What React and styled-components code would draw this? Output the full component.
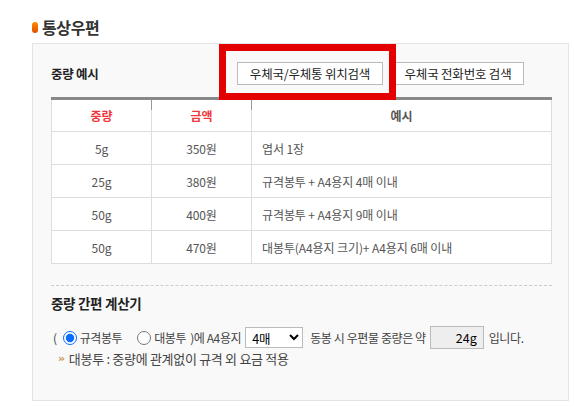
import styled, { createGlobalStyle } from "styled-components";

const GlobalStyle = createGlobalStyle`
  body {
    margin: 0;
    background: #fff;
    font-family: "Noto Sans CJK KR", "Noto Sans", sans-serif;
    color: #333;
  }
`;

/* ===== Layout ===== */
const Page = styled.div`
  padding: 16px 5px 12px 32px;
`;

const TitleRow = styled.div`
  display: flex;
  align-items: center;
  gap: 4px;
  height: 22px;
  margin-bottom: 5px;
`;

const TitleMark = styled.span`
  width: 6px;
  height: 11px;
  border-radius: 3px;
  background: linear-gradient(#ff8a00, #e04e00);
`;

const Title = styled.h2`
  margin: 0;
  font-size: 16px;
  font-weight: 700;
  letter-spacing: -0.4px;
  color: #333;
  line-height: 22px;
`;

const Panel = styled.section`
  background: #f9f9f9;
  border: 1px solid #e4e4e4;
  padding: 18px 16px 33px 18px;
`;

/* ===== Top bar ===== */
const TopBar = styled.div`
  display: flex;
  align-items: center;
  height: 23px;
  margin-bottom: 12px;
`;

const Heading = styled.h3`
  flex: 1;
  margin: 0;
  font-size: ${(p) => p.$size || 12.5}px;
  font-weight: 700;
  color: #222;
  line-height: 16px;
  letter-spacing: -0.3px;
`;

const ButtonGroup = styled.div`
  display: flex;
  gap: 9px;
  margin-right: 28px;
`;

const Highlight = styled.div`
  position: relative;
  display: flex;

  &::after {
    content: "";
    position: absolute;
    top: -18px;
    bottom: -15px;
    left: -18px;
    right: -13px;
    border: 7px solid #e30000;
    pointer-events: none;
  }
`;

const Button = styled.button`
  width: ${(p) => p.$w}px;
  height: 23px;
  padding: 0;
  border: 1px solid #bbb;
  background: #fff;
  font-family: inherit;
  font-size: 12.5px;
  letter-spacing: -0.2px;
  color: #222;
  line-height: 21px;
  cursor: pointer;
`;

/* ===== Table ===== */
const Table = styled.table`
  width: 501px;
  border-collapse: collapse;
  border-top: 3px solid #888;
  background: #fff;
  table-layout: fixed;
`;

const Th = styled.th`
  position: relative;
  height: 31px;
  padding: 0;
  border: 1px solid #ddd;
  border-top: none;
  border-left-color: ${(p) => (p.$first ? "#ddd" : "transparent")};
  font-size: 12px;
  font-weight: 700;
  color: ${(p) => (p.$red ? "#f0363e" : "#555")};

  &::before {
    content: "";
    display: ${(p) => (p.$first ? "none" : "block")};
    position: absolute;
    left: -1px;
    top: 0;
    width: 1px;
    height: 10px;
    background: #999;
  }
`;

const Td = styled.td`
  height: 32px;
  padding: 0 0 0 ${(p) => (p.$left ? "10px" : "0")};
  border: 1px solid #ddd;
  font-size: 12px;
  letter-spacing: -0.1px;
  color: #555;
  text-align: ${(p) => (p.$left ? "left" : "center")};
`;

/* ===== Calculator ===== */
const Divider = styled.hr`
  width: 501px;
  margin: 21px 0 0;
  border: none;
  border-top: 1px dashed #ccc;
`;

const CalcHeading = styled(Heading)`
  margin-top: 9px;
`;

const CalcRow = styled.div`
  display: flex;
  align-items: center;
  height: 23px;
  margin-top: 15px;
  padding-left: 2px;
  font-size: 12px;
  letter-spacing: -0.4px;
  color: #444;
  white-space: nowrap;
`;

const RadioLabel = styled.label`
  display: flex;
  align-items: center;
  margin-right: ${(p) => p.$gap || 0}px;

  input {
    width: 14px;
    height: 14px;
    margin: 0 3px 0 ${(p) => p.$lead || 4}px;
    accent-color: #0a6cff;
  }
`;

const Select = styled.select`
  width: 58px;
  height: 21px;
  margin: 0 7px 0 4px;
  padding: 0 2px;
  border: 1px solid #bbb;
  border-radius: 0;
  background: #fff;
  font-family: inherit;
  font-size: 12.5px;
  color: #000;
`;

const Result = styled.input`
  width: 54px;
  height: 23px;
  box-sizing: border-box;
  margin: 0 5px 0 4px;
  padding: 0 6px 0 0;
  border: 1px solid #bbb;
  background: #eee;
  font-family: inherit;
  font-size: 12.5px;
  color: #000;
  text-align: right;
`;

const Note = styled.p`
  display: flex;
  align-items: center;
  gap: 4px;
  margin: 2px 0 0 7px;
  font-size: 13px;
  letter-spacing: -0.3px;
  color: #444;
  line-height: 16px;
`;

const Bullet = styled.span`
  color: #c8955e;
  font-family: "DejaVu Sans", sans-serif;
  font-weight: 700;
  font-size: 11px;
`;

const rows = [
  ["5g", "350원", "엽서 1장"],
  ["25g", "380원", "규격봉투 + A4용지 4매 이내"],
  ["50g", "400원", "규격봉투 + A4용지 9매 이내"],
  ["50g", "470원", "대봉투(A4용지 크기)+ A4용지 6매 이내"],
];

export default function App() {
  return (
    <>
      <GlobalStyle />
      <Page>
        <TitleRow>
          <TitleMark />
          <Title>통상우편</Title>
        </TitleRow>

        <Panel>
          <TopBar>
            <Heading>중량 예시</Heading>
            <ButtonGroup>
              <Highlight>
                <Button $w={146}>우체국/우체통 위치검색</Button>
              </Highlight>
              <Button $w={132}>우체국 전화번호 검색</Button>
            </ButtonGroup>
          </TopBar>

          <Table>
            <colgroup>
              <col style={{ width: 100 }} />
              <col style={{ width: 100 }} />
              <col />
            </colgroup>
            <thead>
              <tr>
                <Th $red $first>중량</Th>
                <Th $red>금액</Th>
                <Th>예시</Th>
              </tr>
            </thead>
            <tbody>
              {rows.map(([w, p, ex], i) => (
                <tr key={i}>
                  <Td>{w}</Td>
                  <Td>{p}</Td>
                  <Td $left>{ex}</Td>
                </tr>
              ))}
            </tbody>
          </Table>

          <Divider />
          <CalcHeading $size={13.5}>중량 간편 계산기</CalcHeading>

          <CalcRow>
            (
            <RadioLabel $gap={11} $lead={6}>
              <input type="radio" name="env" defaultChecked />
              규격봉투
            </RadioLabel>
            <RadioLabel $gap={4} $lead={4}>
              <input type="radio" name="env" />
              대봉투
            </RadioLabel>
            )에 A4용지
            <Select defaultValue="4">
              <option value="4">4매</option>
            </Select>
            동봉 시 우편물 중량은 약
            <Result readOnly value="24g" />
            입니다.
          </CalcRow>

          <Note>
            <Bullet>»</Bullet>
            대봉투 : 중량에 관계없이 규격 외 요금 적용
          </Note>
        </Panel>
      </Page>
    </>
  );
}
